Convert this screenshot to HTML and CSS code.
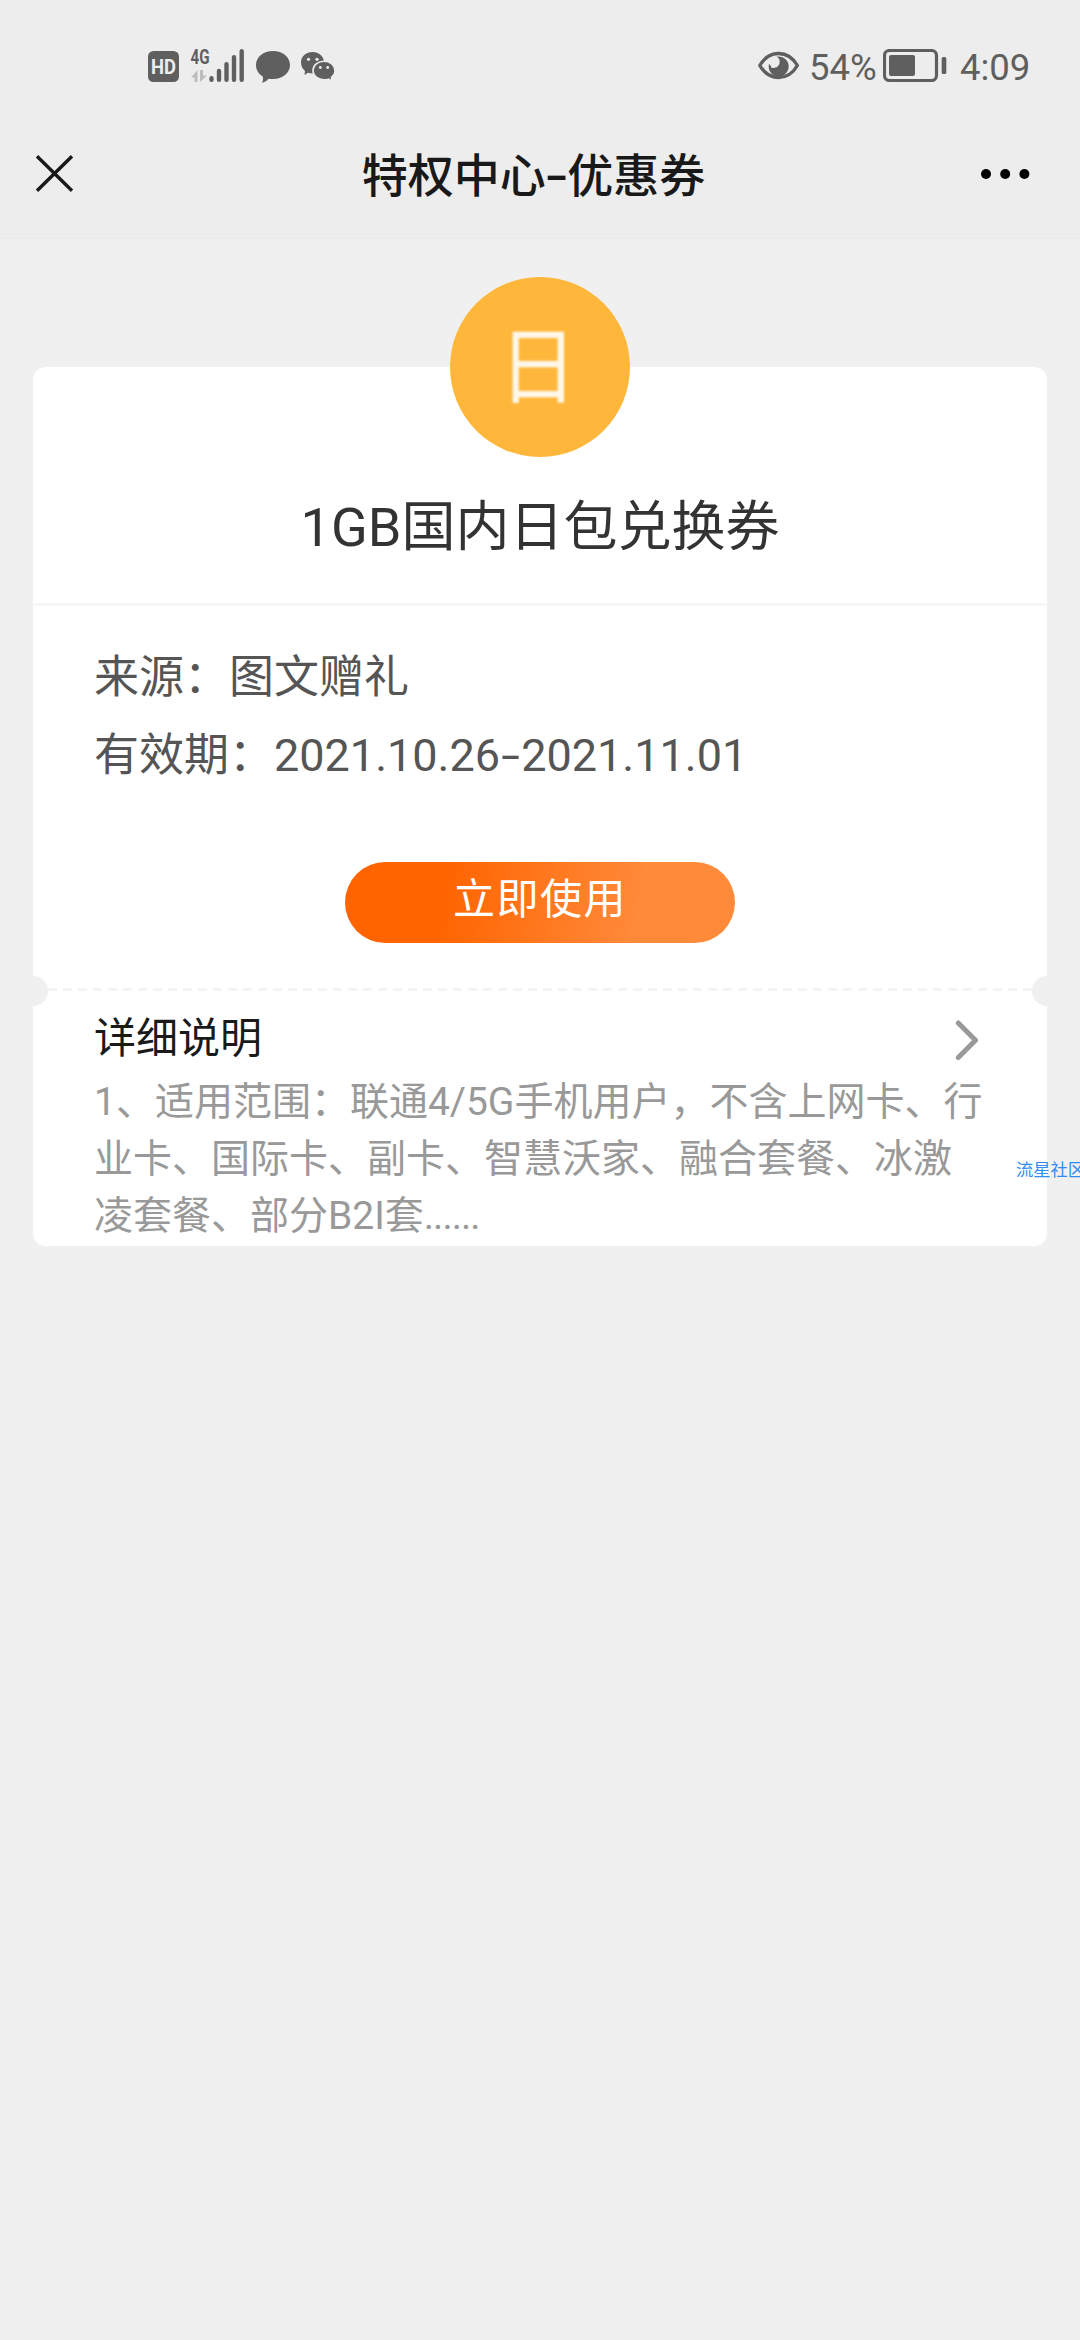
FILE: index.html
```html
<!DOCTYPE html>
<html lang="zh-CN">
<head>
<meta charset="utf-8">
<title>特权中心-优惠券</title>
<link rel="stylesheet" href="styles.css">
</head>
<body>
<header class="top">
  <div class="status">
    <svg class="status-icons" width="190" height="40" viewBox="146 46 190 40" fill="#5f5f5f">
      <rect x="148" y="51" width="31" height="31" rx="5.5"/>
      <text class="hd" x="163.500" y="74" text-anchor="middle" textLength="25" lengthAdjust="spacingAndGlyphs">HD</text>
      <text class="net" x="190.500" y="63.500" textLength="19" lengthAdjust="spacingAndGlyphs">4G</text>
      <path fill="#bdbdbd" d="M191 77.500 L197.500 70 V82 H194.500 V77.500Z M200 70 H203 V75.500 H207 L200 82Z"/>
      <path fill="none" stroke="#5f5f5f" stroke-width="4.400" stroke-linecap="round" d="M211.500 78.200V79.800M219 71V79.800M226.500 64.200V79.800M234 57.200V79.800M241.700 51.200V79.800"/>
      <path d="M273 51C282.500 51 290 57 290 65C290 73 282.500 79 273 79C271 79 270 79 268.500 78.700C267 80.800 264.500 82.200 262 82.800C263.200 80.700 263.500 78.500 262.500 76.300C258.500 73.800 256 69.800 256 65C256 57 263.500 51 273 51Z"/>
      <path d="M312.500 52C319 52 324 56.200 324 62.500C324 69 319 73.500 312.500 73.500C311 73.500 309.500 73.300 308 72.800L304.500 75L305 71C302.500 69 301 66 301 62.500C301 56.500 306 52 312.500 52Z"/>
      <path stroke="#ededed" stroke-width="1.600" d="M324 61.200C330 61.200 335 65 335 70.500C335 73.200 333.600 75.700 331.500 77.300L332 81L328.500 79.200C327 79.600 325.600 79.800 324 79.800C318 79.800 313 76 313 70.500C313 65 318 61.200 324 61.200Z"/>
      <g fill="#ededed"><circle cx="308.500" cy="59.300" r="1.600"/><circle cx="317" cy="59.300" r="1.600"/><circle cx="320.300" cy="67.500" r="1.400"/><circle cx="327.700" cy="67.500" r="1.400"/></g>
    </svg>
    <div class="status-right">
      <svg width="42" height="30" viewBox="758 52 42 30">
        <path fill="none" stroke="#5f5f5f" stroke-width="3.400" stroke-linejoin="round" d="M759.800 66.500C769 50.500 788 50.500 797.400 66.500C788 82.500 769 82.500 759.800 66.500Z"/>
        <path fill="#5f5f5f" d="M778 57.500A10 10 0 1 1 769 65C770.500 65.800 771 67.500 771.500 68.700C775.500 69.700 779 67.500 779.600 64C780 61 779.200 59 776.500 57.700Z"/>
      </svg>
      <span class="pct">54%</span>
      <svg class="battery" width="64" height="34" viewBox="883 50 64 34">
        <rect x="884.500" y="51.500" width="52" height="30" rx="5" fill="none" stroke="#5f5f5f" stroke-width="3.200"/>
        <rect x="889" y="56" width="26" height="21" rx="2" fill="#5f5f5f"/>
        <rect x="941.700" y="58" width="4.600" height="17" rx="1.600" fill="#5f5f5f"/>
      </svg>
      <span class="clock">4:09</span>
    </div>
  </div>
  <nav class="nav">
    <svg width="40" height="40" viewBox="0 0 40 40"><path d="M2 2.200L37 36.800M37 2.200L2 36.800" stroke="#191919" stroke-width="3.400"/></svg>
    <h1 class="nav-title">特权中心<span class="dash">-</span>优惠券</h1>
    <svg width="52" height="12" viewBox="0 0 52 12"><circle cx="6" cy="6" r="5"/><circle cx="25.200" cy="6" r="5"/><circle cx="44.400" cy="6" r="5"/></svg>
  </nav>
</header>
<main class="coupon">
  <section class="head">
    <div class="badge"><span class="badge-char">日</span></div>
    <h2 class="name">1GB国内日包兑换券</h2>
  </section>
  <section class="info">
    <p>来源：图文赠礼</p>
    <p>有效期：2021.10.26<span class="dash">-</span>2021.11.01</p>
    <button class="use">立即使用</button>
  </section>
  <div class="tear"></div>
  <section class="detail">
    <div class="detail-head">
      <h3>详细说明</h3>
      <svg width="24" height="42" viewBox="0 0 24 42"><path d="M3.300 4L20.500 21.200L3.300 38.400" fill="none" stroke="#999" stroke-width="5" stroke-linecap="round" stroke-linejoin="round"/></svg>
    </div>
    <p class="desc">1、适用范围：联通4/5G手机用户，不含上网卡、行<br>业卡、国际卡、副卡、智慧沃家、融合套餐、冰激<br>凌套餐、部分B2I套<span class="dots">......</span></p>
  </section>
</main>
<div class="watermark">流星社区</div>
</body>
</html>
```

FILE: styles.css
```css
* { box-sizing: border-box; margin: 0; padding: 0; }
html, body { width: 1080px; height: 2340px; overflow: hidden; }
body {
  position: relative;
  background: #f0f0f0;
  font-family: Roboto, "Noto Sans CJK SC", sans-serif;
  font-weight: 400;
}
svg { display: block; flex: none; }
.top { height: 239px; background: #ededed; border-bottom: 1px solid #e9e9e9; }
.status {
  height: 112px;
  padding: 46px 52px 26px 146px;
  display: flex;
  justify-content: space-between;
  align-items: center;
}
.status-icons .hd { font-size: 20.500px; font-weight: 700; fill: #ededed; }
.status-icons .net { font-size: 19.500px; font-weight: 700; }
.status-right { display: flex; align-items: center; color: #5f5f5f; font-size: 36.500px; line-height: 40px; }
.pct { margin-left: 9px; width: 74px; padding-top: 4px; white-space: nowrap; }
.battery { margin-right: 13px; }
.clock { width: 68px; padding-top: 4px; white-space: nowrap; }
.nav {
  height: 124px;
  padding: 0 48px 0 35px;
  display: flex;
  align-items: center;
}
.nav-title { flex: 1; padding: 3px 0 0 12px; text-align: center; font-size: 46px; font-weight: 500; line-height: 60px; color: #191919; }
.dash { display: inline-block; width: .47em; text-align: center; transform: scaleX(1.500); }
.coupon {
  margin: 128px 33px 0;
  height: 879px;
  background: #fff;
  border-radius: 13px;
}
.head {
  height: 239px;
  border-bottom: 3px solid #f6f6f6;
  display: flex;
  flex-direction: column;
  align-items: center;
}
.badge {
  width: 180px;
  height: 180px;
  flex: none;
  margin-top: -90px;
  border-radius: 50%;
  background: #ffb73b;
  display: flex;
  align-items: center;
  justify-content: center;
}
.badge-char { font-size: 84px; line-height: 90px; color: #fff8ea; transform: translate(-2px, 2px) scaleX(.93); filter: blur(1px); }
.name { margin-top: 36px; font-size: 54px; font-weight: 400; line-height: 70px; color: #333; }
.info {
  height: 382px;
  padding: 33px 61px 0;
  display: flex;
  flex-direction: column;
  color: #555;
  font-size: 45px;
  line-height: 78px;
}
.use {
  align-self: center;
  margin-top: 67px;
  width: 390px;
  height: 81px;
  border: 0;
  border-radius: 41px;
  padding-bottom: 6px;
  background: linear-gradient(100deg, #ff6400 25%, #ff8a3a 75%);
  color: #fff;
  font: 400 42px/60px Roboto, "Noto Sans CJK SC", sans-serif;
  letter-spacing: 1.500px;
}
.tear {
  height: 30px;
  margin: -12px 0 0;
  background:
    radial-gradient(circle at 0 15px, #f0f0f0 14.500px, transparent 15.500px),
    radial-gradient(circle at 100% 15px, #f0f0f0 14.500px, transparent 15.500px),
    repeating-linear-gradient(90deg, #f4f4f4 0 9px, transparent 9px 15px) 0 12px / 100% 3px no-repeat;
}
.detail { padding: 2px 61px 0; }
.detail-head { display: flex; justify-content: space-between; align-items: center; height: 66px; padding: 0 7px 2px 0; }
.detail-head h3 { padding-bottom: 3px; font-size: 42px; font-weight: 400; line-height: 60px; color: #1a1a1a; }
.desc { font-size: 39px; line-height: 57px; color: #999; white-space: nowrap; }
.dots { letter-spacing: -1px; }
.watermark {
  position: absolute;
  left: 1016px;
  top: 1158px;
  font-size: 17.300px;
  line-height: 24px;
  color: #318cf0;
  white-space: nowrap;
}
```
